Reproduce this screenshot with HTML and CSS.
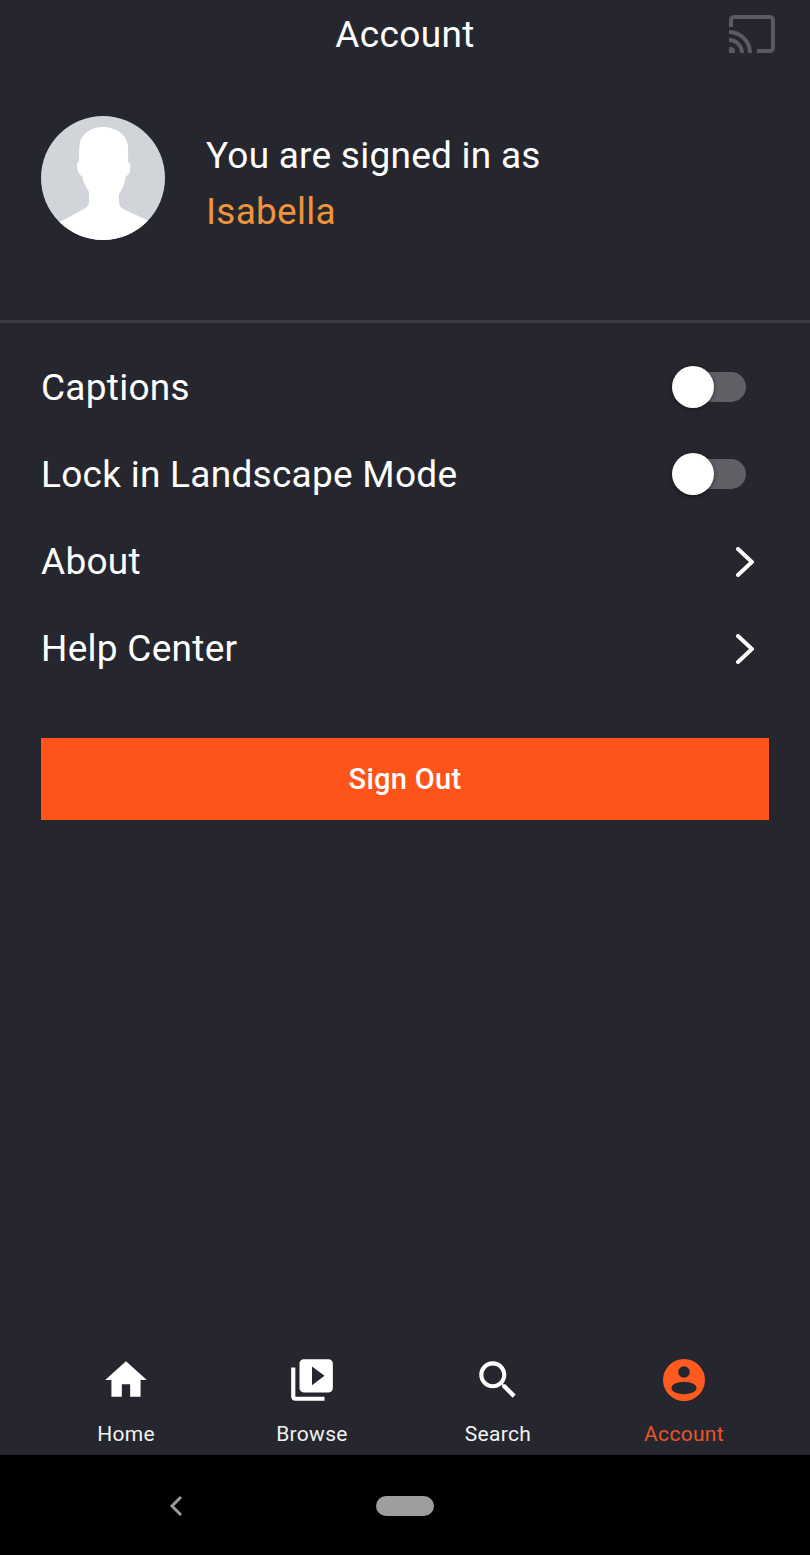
FILE: index.html
```html
<!DOCTYPE html>
<html lang="en">
<head>
    <meta charset="UTF-8">
    <meta name="viewport" content="width=device-width, initial-scale=1.0">
    <title>Account</title>
    <link rel="stylesheet" href="styles.css">
</head>
<body>
    <div class="screen">
        <header class="topbar">
            <h1>Account</h1>
            <svg class="cast-icon" width="46" height="38" viewBox="0 0 46 38" fill="none" stroke="#5a5b61" stroke-width="4">
                <path d="M2 12V5a3 3 0 0 1 3-3h36a3 3 0 0 1 3 3v28a3 3 0 0 1-3 3H28"/>
                <path d="M0 17a21 21 0 0 1 21 21"/>
                <path d="M0 25a13 13 0 0 1 13 13"/>
                <circle cx="2" cy="36" r="4" fill="#5a5b61" stroke="none"/>
            </svg>
        </header>

        <section class="profile">
            <svg class="avatar" width="124" height="124" viewBox="0 0 124 124">
                <clipPath id="avatarClip"><circle cx="62" cy="62" r="62"/></clipPath>
                <circle cx="62" cy="62" r="62" fill="#d1d5da"/>
                <path clip-path="url(#avatarClip)" fill="#fff" d="M62 11C52 11 42 16 39 26C38 32 38 40 38 46C35 46 36 52 37 55C38 58 40 60 41 60C42 66 46 72 48 76L48 86C48 90 45 92 41 94L17 107L10 124H114L108 105L84 94C80 92 78 90 78 86L78 78C82 72 84 66 85 60C87 60 89 57 89 53C90 50 89 46 87 46C87 40 88 32 86 26C84 18 74 11 62 11Z"/>
            </svg>
            <div class="profile-text">
                <div>You are signed in as</div>
                <div class="profile-name">Isabella</div>
            </div>
        </section>

        <ul class="settings">
            <li class="settings-row">
                <span>Captions</span>
                <span class="toggle"></span>
            </li>
            <li class="settings-row">
                <span>Lock in Landscape Mode</span>
                <span class="toggle"></span>
            </li>
            <li class="settings-row">
                <span>About</span>
                <svg class="chevron" width="18" height="30" viewBox="0 0 18 30" fill="none" stroke="#fff" stroke-width="4" stroke-linecap="round">
                    <path d="M2 2l14 13L2 28"/>
                </svg>
            </li>
            <li class="settings-row">
                <span>Help Center</span>
                <svg class="chevron" width="18" height="30" viewBox="0 0 18 30" fill="none" stroke="#fff" stroke-width="4" stroke-linecap="round">
                    <path d="M2 2l14 13L2 28"/>
                </svg>
            </li>
        </ul>

        <button class="sign-out" type="button">Sign Out</button>

        <nav class="tabbar">
            <div class="tab">
                <svg width="50" height="50" viewBox="0 0 24 24" fill="#fff"><path d="M10 20v-6h4v6h5v-8h3L12 3 2 12h3v8z"/></svg>
                <span>Home</span>
            </div>
            <div class="tab">
                <svg width="50" height="50" viewBox="0 0 24 24" fill="#fff"><path d="M4 6H2v14c0 1.1.9 2 2 2h14v-2H4V6zm16-4H8c-1.1 0-2 .9-2 2v12c0 1.1.9 2 2 2h12c1.1 0 2-.9 2-2V4c0-1.1-.9-2-2-2zm-8 12.5v-9l6 4.5-6 4.5z"/></svg>
                <span>Browse</span>
            </div>
            <div class="tab">
                <svg class="search-icon" width="50" height="50" viewBox="0 0 24 24" fill="#fff"><path d="M15.5 14h-.79l-.28-.27C15.41 12.59 16 11.11 16 9.5 16 5.91 13.09 3 9.5 3S3 5.91 3 9.5 5.91 16 9.5 16c1.61 0 3.09-.59 4.23-1.57l.27.28v.79l5 4.99L20.49 19l-4.99-5zm-6 0C7.01 14 5 11.99 5 9.5S7.01 5 9.5 5 14 7.01 14 9.5 11.99 14 9.5 14z"/></svg>
                <span>Search</span>
            </div>
            <div class="tab tab-active">
                <svg width="50" height="50" viewBox="0 0 50 50">
                    <circle cx="25" cy="25" r="21" fill="#ff5a1f"/>
                    <circle cx="25" cy="17" r="5.8" fill="#26272e"/>
                    <ellipse cx="25" cy="33" rx="12.5" ry="6.2" fill="#26272e"/>
                </svg>
                <span>Account</span>
            </div>
        </nav>

        <div class="system-nav">
            <svg class="system-back" width="14" height="22" viewBox="0 0 14 22" fill="none" stroke="#9a9a9a" stroke-width="3">
                <path d="M12 2L3 11l9 9"/>
            </svg>
            <span class="system-home"></span>
        </div>
    </div>
</body>
</html>
```

FILE: styles.css
```css
* {
    box-sizing: border-box;
}
body {
    margin: 0;
    font-family: Roboto, "Liberation Sans", sans-serif;
    background-color: #26272e;
    color: #fff;
}
.screen {
    display: flex;
    flex-direction: column;
    height: 1555px;
}
.topbar {
    position: relative;
    height: 68px;
    display: flex;
    align-items: center;
    justify-content: center;
}
.topbar h1 {
    margin: 0;
    font-size: 37px;
    font-weight: 400;
    letter-spacing: 0.4px;
}
.cast-icon {
    position: absolute;
    right: 35px;
    top: 15px;
}
.profile {
    height: 255px;
    padding: 48px 41px 0;
    display: flex;
    align-items: flex-start;
    gap: 41px;
    border-bottom: 3px solid #3a3b43;
}
.profile-text {
    padding-top: 12px;
    font-size: 37px;
    line-height: 56px;
    letter-spacing: 0.25px;
}
.profile-name {
    color: #ef943c;
}
.settings {
    list-style: none;
    margin: 0;
    padding: 21px 41px 0;
}
.settings-row {
    height: 87px;
    display: flex;
    align-items: center;
    justify-content: space-between;
    font-size: 37px;
    letter-spacing: 0.27px;
}
.toggle {
    position: relative;
    width: 72px;
    height: 30px;
    margin-right: 23px;
    margin-bottom: 1px;
    border-radius: 15px;
    background-color: #5f5f65;
}
.toggle::before {
    content: "";
    position: absolute;
    left: -2px;
    top: -6px;
    width: 42px;
    height: 42px;
    border-radius: 50%;
    background-color: #fff;
    box-shadow: 0 1px 4px rgba(0,0,0,0.5);
}
.chevron {
    margin-right: 15px;
}
.sign-out {
    margin: 46px 41px 0;
    height: 82px;
    border: none;
    background-color: #ff5419;
    color: #fff;
    font-family: inherit;
    font-size: 29px;
    font-weight: 500;
    letter-spacing: 0.3px;
}
.tabbar {
    margin-top: auto;
    height: 100px;
    padding: 0 33px;
    display: grid;
    grid-template-columns: repeat(4, 186px);
}
.tab {
    display: flex;
    flex-direction: column;
    align-items: center;
    font-size: 21px;
    line-height: 25px;
    letter-spacing: 0.3px;
    color: #f2f2f2;
}
.tab span {
    margin-top: 17px;
}
.tab-active {
    color: #e8552a;
}
.system-nav {
    position: relative;
    height: 100px;
    padding-top: 2px;
    background-color: #000;
    display: flex;
    align-items: center;
    justify-content: center;
}
.system-back {
    position: absolute;
    left: 169px;
    top: 40px;
}
.system-home {
    width: 58px;
    height: 20px;
    border-radius: 10px;
    background-color: #9e9e9e;
}
```
